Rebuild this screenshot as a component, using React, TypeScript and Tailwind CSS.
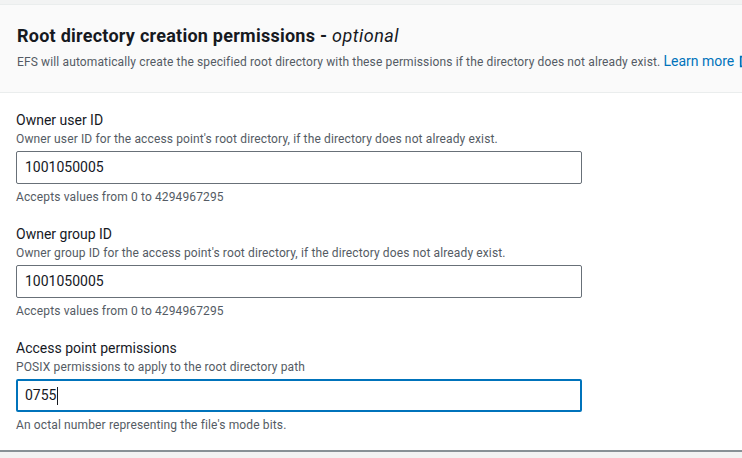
const Field = ({
  label,
  desc,
  value,
  hint,
  focused,
}: {
  label: string
  desc: string
  value: string
  hint: string
  focused?: boolean
}) => {
  return (
    <div className="flex flex-col">
      <label className="text-[14px] leading-[20px] text-[#16191f]">{label}</label>
      <p className="mt-[1px] text-[12px] leading-[16px] tracking-[0.13px] text-[#545b64]">{desc}</p>
      <div
        className={
          focused
            ? "mt-[4px] flex h-[33px] w-[566px] items-center rounded-[2px] border-2 border-[#0073bb] px-[7px] text-[14px] text-[#16191f]"
            : "mt-[4px] flex h-[33px] w-[566px] items-center rounded-[2px] border border-[#687078] px-[8px] text-[14px] text-[#16191f]"
        }
      >
        {value}
        {focused && <span className="ml-[1px] h-[18px] w-px bg-[#16191f]" />}
      </div>
      <p className="mt-[5px] text-[12px] leading-[16px] tracking-[0.13px] text-[#545b64]">{hint}</p>
    </div>
  )
}

export default function App() {
  return (
    <div
      className="h-[458px] w-[742px] overflow-hidden bg-[#f2f3f3]"
      style={{ fontFamily: "Roboto, 'Noto Sans', sans-serif" }}
    >
      <div className="mt-[4px] bg-white">
        <div className="border-b border-t border-[#eaeded] bg-[#fafafa] px-[17px] pb-[21px] pt-[19px]">
          <h2 className="text-[18px] font-bold leading-[24px] tracking-[0.25px] text-[#16191f]">
            Root directory creation permissions -{" "}
            <i className="font-normal tracking-[0.5px]">optional</i>
          </h2>
          <p className="mt-[4px] whitespace-nowrap text-[12px] leading-[18px] tracking-[0.13px] text-[#545b64]">
            EFS will automatically create the specified root directory with these permissions if the directory does not already exist.{" "}
            <span className="text-[14px] tracking-normal text-[#0073bb]">
              Learn more
              <svg className="ml-[5px] inline-block align-[-2px]" width="14" height="14" viewBox="0 0 16 16" fill="none" stroke="#0073bb" strokeWidth="2">
                <path d="M10 2h4v4M14 2L8 8M6 3H2v11h11v-4" />
              </svg>
            </span>
          </p>
        </div>
        <div className="flex h-[359px] flex-col gap-[19px] border-b-2 border-[#879196] px-[16px] pt-[17px]">
          <Field
            label="Owner user ID"
            desc="Owner user ID for the access point's root directory, if the directory does not already exist."
            value="1001050005"
            hint="Accepts values from 0 to 4294967295"
          />
          <Field
            label="Owner group ID"
            desc="Owner group ID for the access point's root directory, if the directory does not already exist."
            value="1001050005"
            hint="Accepts values from 0 to 4294967295"
          />
          <Field
            label="Access point permissions"
            desc="POSIX permissions to apply to the root directory path"
            value="0755"
            hint="An octal number representing the file's mode bits."
            focused
          />
        </div>
      </div>
    </div>
  )
}
